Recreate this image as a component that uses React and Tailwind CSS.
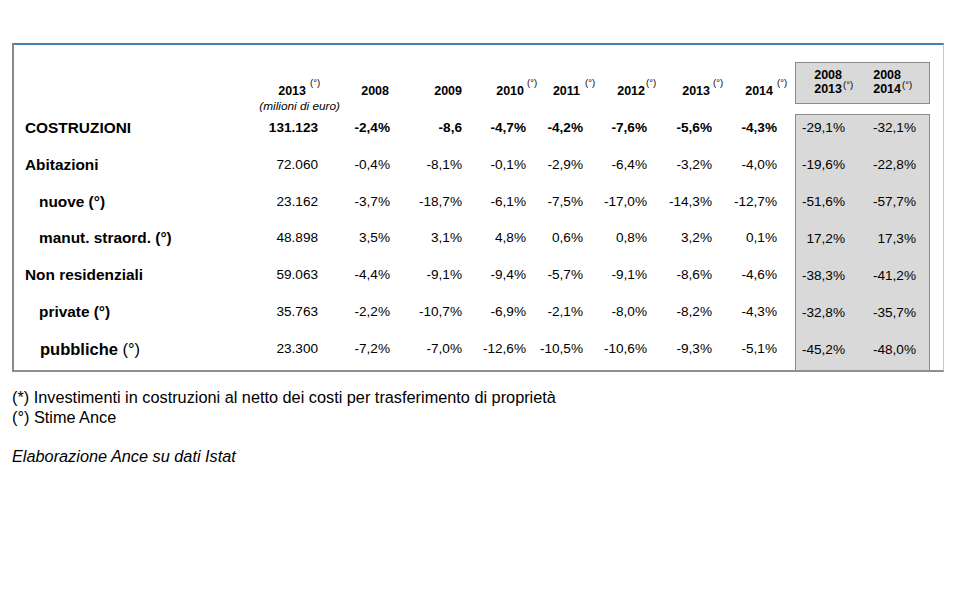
const cols = [
  { w: 'w-[68px]', pr: 'pr-[12px]', y: '2013', sup: 'ml-[4px]', sub: true },
  { w: 'w-[72px]', pr: 'pr-[1px]', y: '2008' },
  { w: 'w-[72px]', pr: 'pr-0', y: '2009' },
  { w: 'w-[64px]', pr: 'pr-[2px]', y: '2010', sup: 'ml-[3px]' },
  { w: 'w-[57px]', pr: 'pr-[3px]', y: '2011', sup: 'ml-[5px]' },
  { w: 'w-[64px]', pr: 'pr-[2px]', y: '2012', sup: 'ml-[1px]' },
  { w: 'w-[65px]', pr: 'pr-[2px]', y: '2013', sup: 'ml-[3px]' },
  { w: 'w-[65px]', pr: 'pr-[4px]', y: '2014', sup: 'ml-[4px]' },
]

const rows = [
  { label: 'COSTRUZIONI', kind: 'main', bold: true, v: ['131.123', '-2,4%', '-8,6', '-4,7%', '-4,2%', '-7,6%', '-5,6%', '-4,3%'], g: ['-29,1%', '-32,1%'] },
  { label: 'Abitazioni', kind: 'main', v: ['72.060', '-0,4%', '-8,1%', '-0,1%', '-2,9%', '-6,4%', '-3,2%', '-4,0%'], g: ['-19,6%', '-22,8%'] },
  { label: 'nuove (°)', kind: 'sub', v: ['23.162', '-3,7%', '-18,7%', '-6,1%', '-7,5%', '-17,0%', '-14,3%', '-12,7%'], g: ['-51,6%', '-57,7%'] },
  { label: 'manut. straord. (°)', kind: 'sub', v: ['48.898', '3,5%', '3,1%', '4,8%', '0,6%', '0,8%', '3,2%', '0,1%'], g: ['17,2%', '17,3%'] },
  { label: 'Non residenziali', kind: 'main', v: ['59.063', '-4,4%', '-9,1%', '-9,4%', '-5,7%', '-9,1%', '-8,6%', '-4,6%'], g: ['-38,3%', '-41,2%'] },
  { label: 'private (°)', kind: 'sub', v: ['35.763', '-2,2%', '-10,7%', '-6,9%', '-2,1%', '-8,0%', '-8,2%', '-4,3%'], g: ['-32,8%', '-35,7%'] },
  { label: 'pubbliche', kind: 'big', v: ['23.300', '-7,2%', '-7,0%', '-12,6%', '-10,5%', '-10,6%', '-9,3%', '-5,1%'], g: ['-45,2%', '-48,0%'], last: true },
]

function Sup({ ml, top = '-top-[9px]' }) {
  // zero-width so the year stays aligned on the column edge
  return (
    <span className="inline-block w-0 whitespace-nowrap">
      <span className={`relative ${top} text-[9.5px] font-normal ${ml}`}>(°)</span>
    </span>
  )
}

function Label({ row }) {
  if (row.kind === 'big') {
    return (
      <div className="pl-[26px] text-[16.5px] font-bold">
        pubbliche <span className="font-normal">(°)</span>
      </div>
    )
  }
  const cls = row.kind === 'main' ? 'pl-[11px]' : 'pl-[25px]'
  return <div className={`${cls} text-[15.4px] font-bold`}>{row.label}</div>
}

export default function App() {
  return (
    <div className="min-h-screen w-[960px] bg-white text-black font-['Liberation_Sans',Arial,sans-serif]">
      <div className="h-[43px]" />
      {/* framed table */}
      <div className="ml-[12px] flex h-[329px] w-[932px] border-t-2 border-l-2 border-r border-b-2 border-t-[#4a7ebb] border-l-[#8a8a8a] border-r-[#c8c8c8] border-b-[#8f8f8f]">
        {/* left part */}
        <div className="flex w-[781px] flex-col">
          <div className="flex h-[69px]">
            <div className="w-[236px]" />
            {cols.map((c, i) => (
              <div key={i} className={`${c.w} ${c.pr} pt-[38px] text-right`}>
                <div className="text-[12.5px] font-bold leading-[16px] whitespace-nowrap">
                  {c.y}
                  {c.sup && <Sup ml={c.sup} />}
                </div>
                {c.sub && (
                  <div className="-mr-[34px] whitespace-nowrap text-right text-[11.8px] italic leading-[12px]">
                    (milioni di euro)
                  </div>
                )}
              </div>
            ))}
          </div>
          {rows.map((r, ri) => (
            <div key={ri} className={`flex ${r.last ? 'h-[35px]' : 'h-[37px]'} leading-[28px]`}>
              <div className="w-[236px] whitespace-nowrap">
                <Label row={r} />
              </div>
              {cols.map((c, i) => (
                <div key={i} className={`${c.w} text-right text-[13.6px] ${r.bold ? 'font-bold' : ''}`}>
                  {r.v[i]}
                </div>
              ))}
            </div>
          ))}
        </div>

        {/* grey comparison columns */}
        <div className="flex w-[135px] flex-col">
          <div className="mt-[17px] flex h-[42px] border border-[#8c8c8c] bg-[#d9d9d9] pt-[5px] text-[12.5px] font-bold leading-[14px]">
            <div className="w-[46px] text-right whitespace-nowrap">
              <div>2008</div>
              <div>2013<Sup ml="ml-[1px]" top="-top-[5px]" /></div>
            </div>
            <div className="w-[59px] text-right whitespace-nowrap">
              <div>2008</div>
              <div>2014<Sup ml="ml-[1px]" top="-top-[5px]" /></div>
            </div>
          </div>
          <div className="mt-[10px] flex-1 overflow-hidden border border-b-0 border-[#8c8c8c] bg-[#d9d9d9]">
            {rows.map((r, ri) => (
              <div key={ri} className={`flex h-[37px] ${ri === 0 ? '-mt-px' : ''} leading-[28px] text-[13.6px]`}>
                <div className="w-[49px] text-right">{r.g[0]}</div>
                <div className="w-[71px] text-right">{r.g[1]}</div>
              </div>
            ))}
          </div>
        </div>
      </div>

      {/* footnotes */}
      <div className="pl-[12px] pt-[15px] text-[16.3px] leading-[20px]">
        <div>(*) Investimenti in costruzioni al netto dei costi per trasferimento di proprietà</div>
        <div>(°) Stime Ance</div>
        <div className="mt-[19px] italic">Elaborazione Ance su dati Istat</div>
      </div>
    </div>
  )
}
